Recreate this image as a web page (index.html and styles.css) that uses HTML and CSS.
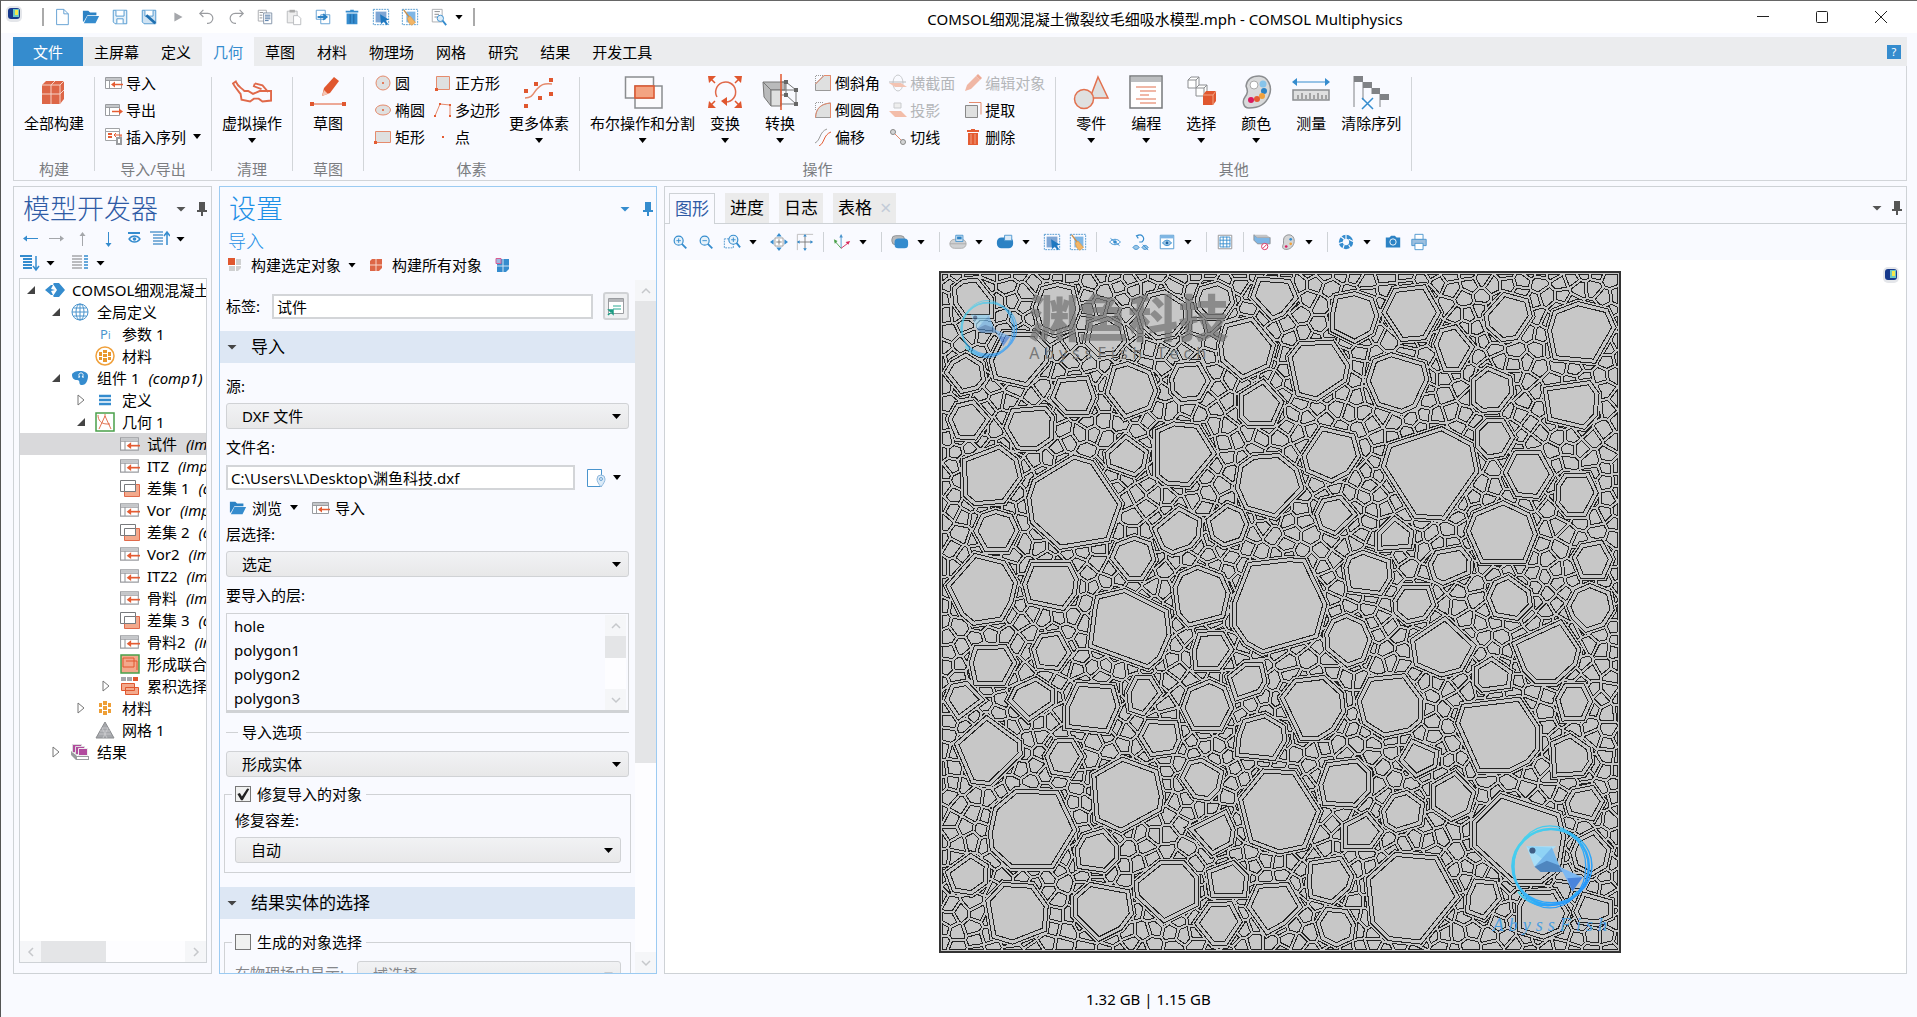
FILE: index.html
```html
<!DOCTYPE html>
<html lang="zh-CN">
<head>
  <meta charset="utf-8">
  <meta name="viewport" content="width=device-width, initial-scale=1.0">
  <title>COMSOL Multiphysics</title>
  <link rel="stylesheet" href="styles.css">
</head>
<body>
  <svg class="sprite" aria-hidden="true">
    <defs>
      <linearGradient id="ring" x1="0" y1="0" x2="1" y2="1"><stop offset="0" stop-color="#4fdcea"/><stop offset="1" stop-color="#1f8cff"/></linearGradient>
    </defs>
    <!-- quick access -->
    <symbol id="i-app" viewBox="0 0 20 20"><rect x="2" y="2" width="16" height="16" rx="5" fill="#e4e6ea"/><rect x="4" y="4" width="12" height="11" rx="3" fill="#173a8c"/><path d="M9 5h6v8H9z" fill="#6cc7c5"/><path d="M11 6h3v5h-3z" fill="#f6e84b"/></symbol>
    <symbol id="i-new" viewBox="0 0 20 20"><path d="M4 1.500h8l5 5v12H4zM12 1.500v5h5" fill="#fff" stroke="#5a9bd0"/></symbol>
    <symbol id="i-open" viewBox="0 0 20 20"><path d="M1 3h6l2 2h7v3H6l-4 7H1z" fill="#2c82c4"/><path d="M6 9h13l-4 8H2z" fill="#358cce"/></symbol>
    <symbol id="i-save" viewBox="0 0 20 20"><path d="M2.500 2.500h15v15h-13l-2-2z" fill="#e8f2fa" stroke="#4a94cd"/><path d="M5.500 3v6h9V3M6.500 17v-5h7v5" fill="#fff" stroke="#4a94cd"/></symbol>
    <symbol id="i-saveas" viewBox="0 0 20 20"><path d="M2.500 2.500h15v15h-13l-2-2z" fill="#cfe3f3" stroke="#4a94cd"/><path d="M5.500 3v6h9V3" fill="#fff" stroke="#4a94cd"/><path d="M7 8l10 9" stroke="#1e6fb0" stroke-width="3"/></symbol>
    <symbol id="i-play" viewBox="0 0 20 20"><path d="M6 5l9 5-9 5z" fill="#a5a7ab"/></symbol>
    <symbol id="i-undo" viewBox="0 0 20 20"><path d="M6 2L2 6l4 4M2 6h9a5 5 0 0 1 0 11h-1" fill="none" stroke="#9a9ca0" stroke-width="1.300"/></symbol>
    <symbol id="i-redo" viewBox="0 0 20 20"><path d="M14 2l4 4-4 4M18 6H9a5 5 0 0 0 0 11h1" fill="none" stroke="#9a9ca0" stroke-width="1.300"/></symbol>
    <symbol id="i-copy" viewBox="0 0 20 20"><path d="M2.500 2.500h9v12h-9z" fill="#fff" stroke="#a5a7ab"/><path d="M4 5h4M4 8h3M4 11h3" stroke="#8a8c90"/><path d="M8.500 5.500h9v12h-9z" fill="#fff" stroke="#7d8ea6"/><path d="M10 8h6M10 10h6M10 12h6M10 14h4" stroke="#416c9e"/></symbol>
    <symbol id="i-paste" viewBox="0 0 20 20"><path d="M2.500 3.500h11v13h-11z" fill="#eee" stroke="#b7b9bc"/><path d="M5 2h6v3H5z" fill="#aaa"/><path d="M9.500 8.500h5l3 3v7h-8z" fill="#fff" stroke="#b7b9bc"/></symbol>
    <symbol id="i-dup" viewBox="0 0 20 20"><path d="M2.500 2.500h10v10h-10zM7.500 7.500h10v10h-10z" fill="#fff" stroke="#5a9bd0"/><path d="M4 10h9M10 7l4 3-4 3" fill="none" stroke="#2c82c4" stroke-width="2"/></symbol>
    <symbol id="i-del" viewBox="0 0 20 20"><path d="M8 2h4v1h5v2H3V3h5zM4 6h12v12H4z" fill="#358cce"/><path d="M8 7v10M12 7v10" stroke="#1d639f"/></symbol>
    <symbol id="i-sel" viewBox="0 0 20 20"><path d="M1.500 1.500h17v17h-17z" fill="none" stroke="#4a94cd" stroke-dasharray="2 1"/><path d="M4 4h12v12H4z" fill="#7ea6d5"/><path d="M9 7l10 6-4 1 3 4-2 1-3-4-3 3z" fill="#1e78c0"/></symbol>
    <symbol id="i-brush" viewBox="0 0 20 20"><path d="M1.500 1.500h17v17h-17z" fill="none" stroke="#4a94cd" stroke-dasharray="2 1"/><path d="M6 4h10v12H6z" fill="#7eb6e5"/><path d="M3 2l6 8" stroke="#c98e4a" stroke-width="1.500"/><path d="M7 11l3-2 6 7-4 3c-4-2-4-5-5-8z" fill="#f3b565" stroke="#dba055"/></symbol>
    <symbol id="i-find" viewBox="0 0 20 20"><path d="M2.500 1.500h11v14h-11z" fill="#fff" stroke="#a5a7ab"/><path d="M5 4h6M5 7h5M5 10h3" stroke="#808286"/><circle cx="11.500" cy="11.500" r="3.500" fill="#dcecf8" stroke="#358cce"/><path d="M14 14l4 5" stroke="#358cce" stroke-width="2"/></symbol>
    <!-- ribbon, small -->
    <symbol id="i-import" viewBox="0 0 18 18"><path d="M.500 3.500h16v11h-16z" fill="#fff" stroke="#9a9ca0"/><path d="M1 4h15v2H1z" fill="#c4c6c9"/><path d="M.500 6.500h16M4.500 6.500v8" stroke="#9a9ca0"/><path d="M8 10.500h10" stroke="#e45c33" stroke-width="1.500"/><path d="M6 10.500l4-3v6z" fill="#e45c33"/></symbol>
    <symbol id="i-export" viewBox="0 0 18 18"><path d="M.500 3.500h14v11H.500z" fill="#fff" stroke="#9a9ca0"/><path d="M1 4h13v2H1z" fill="#c4c6c9"/><path d="M.500 6.500h14M4.500 6.500v8" stroke="#9a9ca0"/><path d="M7 10.500h8" stroke="#e45c33" stroke-width="1.500"/><path d="M18 10.500l-4-3v6z" fill="#e45c33"/></symbol>
    <symbol id="i-insert" viewBox="0 0 18 18"><path d="M.500.500h14v12h-14zM.500 3.500h14" fill="#fff" stroke="#a1a3a6"/><path d="M3 6h4M3 9h4" stroke="#e45c33" stroke-width="2"/><path d="M9 7h8M11 5L9 7l2 2M16 7v3" fill="none" stroke="#e45c33"/><path d="M11 9h6v8h-6z" fill="#9a9ca0"/><path d="M13 11h2v4h-2z" fill="#fff"/></symbol>
    <symbol id="i-circle" viewBox="0 0 18 18"><circle cx="9" cy="9" r="7" fill="#dfe0e0" stroke="#e58b6d"/><circle cx="9" cy="9" r="1" fill="#e45c33"/></symbol>
    <symbol id="i-ellipse" viewBox="0 0 18 18"><ellipse cx="9" cy="9" rx="7.500" ry="5" fill="#dfe0e0" stroke="#e58b6d"/><circle cx="9" cy="9" r="1" fill="#e45c33"/></symbol>
    <symbol id="i-rect" viewBox="0 0 18 18"><path d="M1.500 3.500h15v11h-15z" fill="#dfe0e0" stroke="#e58b6d"/><path d="M0 13h3v3H0z" fill="#e45c33"/></symbol>
    <symbol id="i-square" viewBox="0 0 18 18"><path d="M2.500 2.500h13v13h-13z" fill="#dfe0e0" stroke="#e58b6d"/><path d="M1 14h3v3H1z" fill="#e45c33"/></symbol>
    <symbol id="i-poly" viewBox="0 0 18 18"><path d="M1 15L6 3l10 1v11" fill="none" stroke="#e58b6d"/><path d="M0 14h2v2H0zM5 2h2v2H5zM15 3h2v2h-2zM15 14h2v2h-2z" fill="#e45c33"/></symbol>
    <symbol id="i-point" viewBox="0 0 18 18"><path d="M8 8h2v2H8z" fill="#e45c33"/></symbol>
    <symbol id="i-chamfer" viewBox="0 0 18 18"><path d="M1.500 9V1.500H9" fill="none" stroke="#999" stroke-dasharray="1 1"/><path d="M1.500 16.500V10L10 1.500h6.500v15z" fill="#dfe0e0" stroke="#999"/><path d="M1.500 10L10 1.500h6.500v15" fill="none" stroke="#e58b6d"/></symbol>
    <symbol id="i-fillet" viewBox="0 0 18 18"><path d="M1.500 9V1.500H9" fill="none" stroke="#999" stroke-dasharray="1 1"/><path d="M1.500 16.500C2 8 6 3 16.500 2v14.500z" fill="#dfe0e0" stroke="#999"/><path d="M1.500 16.500C2 8 6 3 16.500 2v15" fill="none" stroke="#e58b6d"/></symbol>
    <symbol id="i-offset" viewBox="0 0 18 18"><path d="M1 15C7 12 5 4 13 1" fill="none" stroke="#999"/><path d="M5 18c6-3 4-11 12-14" fill="none" stroke="#e45c33"/></symbol>
    <symbol id="i-section" viewBox="0 0 18 18"><ellipse cx="9" cy="9" rx="5" ry="8" fill="none" stroke="#c9cbce"/><path d="M0 9h12l6 4H6z" fill="#f3c3b2"/><path d="M0 8h17" stroke="#b8babd"/></symbol>
    <symbol id="i-proj" viewBox="0 0 18 18"><path d="M5 2h7v5H5z" fill="#eee" stroke="#c9cbce"/><path d="M0 10h12l6 6H6z" fill="#f3bda9"/></symbol>
    <symbol id="i-tangent" viewBox="0 0 18 18"><path d="M4 4l10 10" stroke="#e58b6d"/><circle cx="4" cy="4" r="2.500" fill="#d4d5d6" stroke="#888"/><circle cx="14" cy="14" r="2.500" fill="#d4d5d6" stroke="#888"/></symbol>
    <symbol id="i-edit" viewBox="0 0 18 18"><path d="M1 17l2-6L12 2l4 4-9 9z" fill="#f0b7a5"/><path d="M12 2l2-2 4 4-2 2z" fill="#edaa95"/></symbol>
    <symbol id="i-extract" viewBox="0 0 18 18"><path d="M5 1.500h12v12" fill="none" stroke="#e58b6d"/><path d="M1.500 4.500h12v12h-12z" fill="#dfe0e0" stroke="#888"/></symbol>
    <symbol id="i-trash" viewBox="0 0 18 18"><path d="M7 1h4v1h4v2H3V2h4zM4 5h10v12H4z" fill="#e45c33"/><path d="M7 6v10M11 6v10" stroke="#f0a084"/></symbol>
    <!-- ribbon, large -->
    <symbol id="b-build" viewBox="0 0 36 36"><path d="M6 11l4-4h18v18l-4 5H6z" fill="#dd6647"/><path d="M6 11h18v19M24 11l4-4M15 11v19M6 20h18l4-4M15 11l4-4" fill="none" stroke="#f6d3c8"/></symbol>
    <symbol id="b-glasses" viewBox="0 0 42 36"><path d="M9 20C6 16 3 13 1 9l3-2c2 5 5 6 9 10h4l5 3 7-3h12v10l-9 1-4-3h-5l-4 3-9-2zM24 9l8 2 6 7M24 9l-1 3 8 3" fill="none" stroke="#e0694a" stroke-width="2"/></symbol>
    <symbol id="b-sketch" viewBox="0 0 36 36"><path d="M12 22l2-8L24 3l5 4-9 12z" fill="#e0572f"/><path d="M12 22l2-6 4 4z" fill="#f5c5b3"/><path d="M1 30h34" stroke="#e0572f"/><path d="M0 28h4v4H0zM32 28h4v4h-4z" fill="#e0572f"/></symbol>
    <symbol id="b-more" viewBox="0 0 36 36"><path d="M4 24c8 0 8-5 12-9s6-6 15-5" fill="none" stroke="#e58b6d" stroke-width="1.500"/><path d="M28 4h4v4h-4zM13 8h4v4h-4zM3 15h4v4H3zM28 18h4v4h-4zM17 22h4v4h-4zM3 30h4v4H3z" fill="#e0572f"/></symbol>
    <symbol id="b-bool" viewBox="0 0 40 36"><path d="M2.500 3h28v21h-28zM12 12h27v22H12z" fill="#fbfbfd" stroke="#8b8d90" stroke-width="1.500"/><path d="M12 12h19v12H12z" fill="#f3a482" stroke="#e0572f" stroke-width="1.500"/></symbol>
    <symbol id="b-trans" viewBox="0 0 36 36"><path d="M10 23a10 10 0 1 1 9 5" fill="none" stroke="#e0694a" stroke-width="1.500"/><path d="M20 23v9l-6-5zM1 2h8L2 9zM35 2h-8l7 7zM1 34h8l-7-7zM35 34h-8l7-7z" fill="#e0572f"/><path d="M3 4l5 5M33 4l-5 5M3 32l5-5M33 32l-5-5" stroke="#e0572f" stroke-width="1.500"/></symbol>
    <symbol id="b-conv" viewBox="0 0 36 36"><path d="M1 8l8 8v16l-7-9zM1 8h22v8H9z" fill="#b9babb" stroke="#777"/><path d="M9 16h10v16H9z" fill="#dfe0e0" stroke="#777"/><path d="M18 8h6l10 8v14H18M24 8v13l10 9M18 21h6M18 16h16" fill="none" stroke="#777"/><path d="M22 6h4v4h-4zM32 14h4v4h-4zM22 19h4v4h-4zM32 28h4v4h-4z" fill="#666"/><path d="M19 0v36" stroke="#e0572f" stroke-width="1.500"/></symbol>
    <symbol id="b-parts" viewBox="0 0 36 36"><path d="M25 3l10 21H17z" fill="#dfe0e0" stroke="#e2714f" stroke-width="1.500"/><circle cx="11" cy="25" r="9.500" fill="#dfe0e0" stroke="#e2714f" stroke-width="1.500"/></symbol>
    <symbol id="b-prog" viewBox="0 0 36 36"><path d="M2 2h32v32H2z" fill="#fff" stroke="#77797c" stroke-width="1.500"/><path d="M3 3h30v5H3z" fill="#bcbec0"/><path d="M8 13h20M12 17h16M12 21h9M8 25h20M12 29h16" stroke="#e2714f" stroke-width="1.200"/></symbol>
    <symbol id="b-select" viewBox="0 0 36 36"><path d="M5 6l3-3h8v8l-3 3H5zM5 6h8v8M13 6l3-3M13 14l3-3h8v8l-3 3h-8zM13 14h8v8M21 14l3-3" fill="#fff" stroke="#8b8d90"/><path d="M20 21l3-4h10v10l-3 4H20z" fill="#e0572f"/><path d="M20 21h10v10M30 21l3-4" fill="none" stroke="#f3a482"/></symbol>
    <symbol id="b-color" viewBox="0 0 36 36"><path d="M8 12C9 5 14 2 21 2c9 0 14 11 10 20-4 10-13 12-20 12-6 0-7-7-4-11s3-6 1-11z" fill="#d9dadb" stroke="#8b8d90" stroke-width="1.500"/><circle cx="16" cy="11" r="4" fill="#fff" stroke="#aaa"/><circle cx="25" cy="10" r="3.500" fill="#88c4ea"/><circle cx="26" cy="17" r="3" fill="#2c82c4"/><circle cx="24" cy="22" r="3" fill="#f0a13c"/><circle cx="19" cy="25" r="3" fill="#e45c33"/><circle cx="13" cy="26" r="3" fill="#d81b60"/></symbol>
    <symbol id="b-measure" viewBox="0 0 38 36"><path d="M3 8h32" stroke="#358cce"/><path d="M0 8l5-4v8zM38 8l-5-4v8z" fill="#358cce"/><path d="M1 16h36v10H1z" fill="#dfe0e0" stroke="#8b8d90" stroke-width="1.500"/><path d="M6 25v-4M10 25v-6M14 25v-4M18 25v-6M22 25v-4M26 25v-6M30 25v-4M34 25v-4" stroke="#666"/></symbol>
    <symbol id="b-clear" viewBox="0 0 36 36"><path d="M1 2h9v6H1zM10 8h9v6h-9zM19 14h8v6h-8zM27 20h9v6h-9z" fill="#808286"/><path d="M1 2v31M10 8v18M19 14v6M27 20v13" stroke="#808286"/><path d="M9 24l11 11M20 24L9 35" stroke="#358cce" stroke-width="1.500"/></symbol>
    <!-- panels -->
    <symbol id="i-pin" viewBox="0 0 12 16"><path d="M3 1h6v8h2v2H7v4H5v-4H1V9h2z" fill="currentColor"/></symbol>
    <symbol id="i-left" viewBox="0 0 20 20"><path d="M18 9.500H4" stroke="currentColor"/><path d="M3 9.500l4-3v6z" fill="currentColor"/></symbol>
    <symbol id="i-right" viewBox="0 0 20 20"><path d="M3 9.500h13" stroke="currentColor"/><path d="M18 9.500l-4-3v6z" fill="currentColor"/></symbol>
    <symbol id="i-up" viewBox="0 0 20 20"><path d="M10.500 17V4" stroke="currentColor"/><path d="M10.500 3l-3 4h6z" fill="currentColor"/></symbol>
    <symbol id="i-down" viewBox="0 0 20 20"><path d="M10.500 3v13" stroke="currentColor"/><path d="M10.500 18l-3-4h6z" fill="currentColor"/></symbol>
    <symbol id="i-eye" viewBox="0 0 20 20"><path d="M4 4h12" stroke="#358cce" stroke-width="2"/><path d="M5 10c3-4 8-4 11 0-3 4-8 4-11 0z" fill="none" stroke="#358cce" stroke-width="1.300"/><circle cx="10.500" cy="10" r="1.800" fill="#358cce"/></symbol>
    <symbol id="i-listup" viewBox="0 0 20 20"><path d="M0 3h13M3 6h10M3 9h10M3 12h10M3 15h10" stroke="#5a9bd0" stroke-width="1.500"/><path d="M17 16V4M14 7l3-4 3 4" fill="none" stroke="#358cce" stroke-width="1.500"/></symbol>
    <symbol id="i-listdown" viewBox="0 0 20 20"><path d="M0 3h12M3 6h9M3 9h9M3 12h9M3 15h9" stroke="#358cce" stroke-width="2"/><path d="M16 3v13M13 13l3 4 3-4" fill="none" stroke="#358cce" stroke-width="1.500"/></symbol>
    <symbol id="i-cols" viewBox="0 0 20 20"><path d="M2 3h10M2 6h10M2 9h10M2 12h10M2 15h10" stroke="#a5a7ab" stroke-width="1.500"/><path d="M14 3h4M14 6h4M14 9h4M14 12h4M14 15h4" stroke="#358cce" stroke-width="1.500"/></symbol>
    <symbol id="t-open" viewBox="0 0 12 12"><path d="M10 2v8H2z" fill="#444"/></symbol>
    <symbol id="t-shut" viewBox="0 0 12 12"><path d="M3 1l6 5-6 5z" fill="#fff" stroke="#777"/></symbol>
    <symbol id="t-root" viewBox="0 0 20 20"><path d="M0 10l6-5h2L6 9l4 1-4 1 2 4H6zM9 3h5l6 7-6 7H9l-1-1 4-6-4-6z" fill="#358cce"/></symbol>
    <symbol id="t-globe" viewBox="0 0 20 20"><g fill="none" stroke="#4a94cd"><circle cx="10" cy="10" r="8"/><ellipse cx="10" cy="10" rx="4" ry="8"/><path d="M2 10h16M10 2v16M3.500 6h13M3.500 14h13"/></g></symbol>
    <symbol id="t-mat" viewBox="0 0 20 20"><circle cx="10" cy="10" r="9" fill="#fff" stroke="#f0a13c" stroke-width="1.500"/><path d="M8 4h4v3H8zM4 6h3v4H4zM13 6h3v4h-3zM8 8h4v3H8zM4 11h3v3H4zM13 11h3v3h-3zM8 12h4v4H8z" fill="#e8972e"/></symbol>
    <symbol id="t-mat2" viewBox="0 0 20 20"><path d="M8 3h4v4H8zM4 5h3v4H4zM13 5h3v4h-3zM8 8h4v4H8zM4 11h3v4H4zM13 11h3v4h-3zM8 13h4v4H8z" fill="#ee9f36"/></symbol>
    <symbol id="t-comp" viewBox="0 0 20 20"><path d="M2 7c0-5 16-6 16 1 0 4-2 10-7 9-3-1 0-5-4-5-3 0-5-2-5-5z" fill="#358cce"/><path d="M8 9h2c-2-2-1-4 1-4s3 2 1 4h2" fill="none" stroke="#fff"/></symbol>
    <symbol id="t-def" viewBox="0 0 20 20"><path d="M4 6h12M4 10h12M4 14h12" stroke="#358cce" stroke-width="2.500"/></symbol>
    <symbol id="t-geom" viewBox="0 0 20 20"><path d="M1 1h18v18H1z" fill="#fff" stroke="#4aa04a" stroke-width="1.500"/><path d="M3 3c0 5 3 9 9 9h3M10 4L4 17M10 4l6 13M10 2v3" fill="none" stroke="#e2714f"/></symbol>
    <symbol id="t-diff" viewBox="0 0 20 20"><path d="M4.500 6.500h15v12h-15z" fill="#f3a98c" stroke="#e0694a"/><path d="M.500 2.500h15v11H.500z" fill="#fff" stroke="#77797c"/><path d="M4.500 6.500h11v7h-11z" fill="#fff" stroke="#77797c"/></symbol>
    <symbol id="t-union" viewBox="0 0 20 20"><path d="M1 1h18v18H1z" fill="#f3a98c" stroke="#4aa04a" stroke-width="1.500"/><path d="M3 4h11v9H3zM6 7h11v9" fill="none" stroke="#e0572f"/></symbol>
    <symbol id="t-cum" viewBox="0 0 20 20"><path d="M1 1h5v4H1zM7 1h5v4H7z" fill="#a5a7ab"/><path d="M13 1h5v4h-5z" fill="#e0572f"/><path d="M1.500 7.500h13v7h-13zM5.500 11.500h13v7h-13z" fill="#f3a98c" stroke="#e0572f"/></symbol>
    <symbol id="t-mesh" viewBox="0 0 20 20"><path d="M10 2l9 16H1z" fill="#a5a7ab" stroke="#8b8d90"/><path d="M7 8h6M5 11h10M4 14h12M7 8l5 10M13 8L8 18" stroke="#d2d3d5" stroke-width=".700"/></symbol>
    <symbol id="t-res" viewBox="0 0 20 20"><path d="M1 9l6 5h12v4H6l-5-5z" fill="#999b9e"/><path d="M7 15h11v2H7z" fill="#fff"/><path d="M2.500 2.500h9v8h-9z" fill="#b14b9e" stroke="#ddd"/><path d="M5.500 4.500h9v8h-9z" fill="#b14b9e" stroke="#ddd"/><path d="M8.500 6.500h9v7h-9z" fill="#b14b9e" stroke="#eee"/></symbol>
    <symbol id="i-bsel" viewBox="0 0 18 18"><path d="M5 5l2-2h8v9l-3 3H3V7z" fill="#cfd0d1"/><path d="M2 2h7v7H2z" fill="#e0572f"/><path d="M9.500 3v12M3 9.500h12" stroke="#fff"/></symbol>
    <symbol id="i-ball" viewBox="0 0 18 18"><path d="M3 5l2-2h10v9l-3 3H3z" fill="#dd6647"/><path d="M9 3v12M3 9h12" stroke="#f8d5ca"/></symbol>
    <symbol id="i-bblue" viewBox="0 0 18 18"><path d="M4 5l2-2h10v10l-3 3H4z" fill="#358cce"/><path d="M10 3v13M4 10h12" stroke="#cfe3f3"/><path d="M3 2.500h5v5H3z" fill="#9db8e0" stroke="#d85c92"/></symbol>
    <symbol id="i-goto" viewBox="0 0 20 20"><path d="M2.500 2.500h15v15h-15z" fill="#fff" stroke="#9a9ca0"/><path d="M3 3h14v3H3z" fill="#b4b6b9"/><path d="M7 10h8M7 13h8" stroke="#2bab93"/><path d="M2 19l4-4M3 14h4v4z" stroke="#1c9c83" stroke-width="1.500" fill="#1c9c83"/></symbol>
    <symbol id="i-loc" viewBox="0 0 20 20"><path d="M1.500 1.500h14v17h-14z" fill="#fff" stroke="#4a94cd"/><path d="M15 19c-3-4-4-6-4-8a4 4 0 0 1 8 0c0 2-1 4-4 8z" fill="#dcebf8" stroke="#8fb8dd"/><circle cx="15" cy="11" r="1.500" fill="none" stroke="#6ea5d5"/></symbol>
    <symbol id="i-chev" viewBox="0 0 12 12"><path d="M2 8l4-4 4 4" fill="none" stroke="#c6c8cb" stroke-width="1.500"/></symbol>
    <!-- graphics toolbar -->
    <symbol id="g-zin" viewBox="0 0 20 20"><circle cx="8.500" cy="8.500" r="5" fill="#e7f2fa" stroke="#358cce" stroke-width="1.300"/><path d="M6 8.500h5M8.500 6v5" stroke="#358cce"/><path d="M12 12l5 5" stroke="#358cce" stroke-width="2"/></symbol>
    <symbol id="g-zout" viewBox="0 0 20 20"><circle cx="8.500" cy="8.500" r="5" fill="#e7f2fa" stroke="#358cce" stroke-width="1.300"/><path d="M6 8.500h5" stroke="#358cce"/><path d="M12 12l5 5" stroke="#358cce" stroke-width="2"/></symbol>
    <symbol id="g-zbox" viewBox="0 0 20 20"><path d="M1.500 6.500h10v10h-10z" fill="none" stroke="#4a94cd" stroke-dasharray="2 1"/><circle cx="11.500" cy="7.500" r="5" fill="#e7f2fa" stroke="#358cce" stroke-width="1.300"/><path d="M9 7.500h5M11.500 5v5" stroke="#358cce"/><path d="M15 11l4 5" stroke="#358cce" stroke-width="2"/></symbol>
    <symbol id="g-ext" viewBox="0 0 20 20"><path d="M5.500 5.500h9v9h-9z" fill="#fff" stroke="#999"/><path d="M7 10h6M10 7v6" stroke="#777"/><path d="M10 0l3 4H7zM10 20l3-4H7zM0 10l4-3v6zM20 10l-4-3v6z" fill="#358cce"/></symbol>
    <symbol id="g-ext2" viewBox="0 0 20 20"><path d="M1.500 19V1.500H19" fill="none" stroke="#bbb"/><path d="M10 3v15M2 10h16" stroke="#777"/><path d="M10 1l2 3H8zM10 20l2-3H8zM1 10l3-2v4zM19 10l-3-2v4z" fill="#358cce"/></symbol>
    <symbol id="g-axes" viewBox="0 0 20 20"><path d="M9 17V3" stroke="#4a94cd"/><path d="M9 1l2 4H7z" fill="#4a94cd"/><path d="M9 17L2 9" stroke="#4aa04a"/><path d="M1 7l4 2-3 3z" fill="#4aa04a"/><path d="M9 17l8-6" stroke="#d8285a"/><path d="M19 9l-2 4-3-3z" fill="#d8285a"/></symbol>
    <symbol id="g-scene" viewBox="0 0 20 20"><rect x="1" y="3" width="14" height="10" rx="4" fill="#b9bbbd" stroke="#8b8d90"/><rect x="4" y="6" width="15" height="11" rx="4" fill="#358cce"/></symbol>
    <symbol id="g-view1" viewBox="0 0 20 20"><rect x="1" y="7" width="18" height="10" rx="5" fill="#d0d1d3" stroke="#aaa"/><path d="M7.500 2.500h8v7h-8z" fill="#cfe3f3" stroke="#4a94cd"/><path d="M9 4h5v3H9z" fill="#2c82c4"/><path d="M1 12h18" stroke="#aaa"/></symbol>
    <symbol id="g-view2" viewBox="0 0 20 20"><rect x="1" y="5" width="18" height="12" rx="5" fill="#2c82c4"/><path d="M9.500 2.500h8v6h-8z" fill="#dcebf8" stroke="#4a94cd"/></symbol>
    <symbol id="g-hide" viewBox="0 0 20 20"><path d="M4 10c3-4 9-4 12 0-3 4-9 4-12 0zM5 6l10 8" fill="none" stroke="#358cce"/><circle cx="10" cy="10" r="2" fill="#358cce"/></symbol>
    <symbol id="g-reset" viewBox="0 0 20 20"><path d="M8 2l-3 1 2 3M6 3c6-3 9 4 5 7H8" fill="none" stroke="#358cce" stroke-width="1.300"/><path d="M1 16c2-3 5-3 7 0-2 3-5 3-7 0zM11 16c2-3 5-3 7 0-2 3-5 3-7 0zM12 13l6 6" fill="#9cc6e6" stroke="#358cce"/></symbol>
    <symbol id="g-eyebox" viewBox="0 0 20 20"><path d="M2.500 2.500h15v15h-15z" fill="#fff" stroke="#4a94cd"/><path d="M3 3h14v3H3z" fill="#7eb6e5"/><path d="M5 11c3-4 7-4 10 0-3 4-7 4-10 0z" fill="#9cc6e6" stroke="#358cce"/><circle cx="10" cy="11" r="1.500" fill="#1d639f"/></symbol>
    <symbol id="g-grid" viewBox="0 0 20 20"><path d="M2.500 2.500h15v15h-15z" fill="#fff" stroke="#8e9094"/><path d="M4.500 4.500h11v11h-11zM8 4v12M12 4v12M4 8h12M4 12h12" fill="none" stroke="#358cce"/></symbol>
    <symbol id="g-clip" viewBox="0 0 20 20"><path d="M1 2l4 3h14v7H5L1 8z" fill="#7eb6e5" stroke="#8b8d90"/><path d="M1 2h14l4 3H5z" fill="#c4c5c7"/><circle cx="13" cy="15" r="3.500" fill="#fff" stroke="#d8285a"/><path d="M11 17l4-4" stroke="#d8285a"/></symbol>
    <symbol id="g-pal" viewBox="0 0 20 20"><path d="M5 8c0-4 3-6 6-6 6 0 7 7 5 11s-6 6-10 5c-3-1-2-4-1-6z" fill="#d4d5d6" stroke="#8b8d90"/><circle cx="13" cy="7" r="1.500" fill="#358cce"/><circle cx="13" cy="12" r="1.500" fill="#f0a13c"/><circle cx="8" cy="15" r="1.500" fill="#d81b60"/></symbol>
    <symbol id="g-shut" viewBox="0 0 20 20"><circle cx="10" cy="10" r="8" fill="#358cce"/><circle cx="10" cy="10" r="3.500" fill="#f9faff"/><path d="M10 1v6M19 10l-6-3M16 18l-3-5M6 19l2-6M1 12l6-2M3 3l5 4" stroke="#f9faff" stroke-width="1.300"/></symbol>
    <symbol id="g-cam" viewBox="0 0 20 20"><path d="M2 5h4l2-2h4l2 2h4v11H2z" fill="#2c82c4"/><circle cx="10" cy="10" r="3.500" fill="#2c82c4" stroke="#fff"/></symbol>
    <symbol id="g-print" viewBox="0 0 20 20"><path d="M5.500 1.500h9v6h-9z" fill="#fff" stroke="#4a94cd"/><path d="M2 7h16v7H2z" fill="#9cbfdf" stroke="#4a94cd"/><path d="M5.500 11.500h9v7h-9z" fill="#fff" stroke="#4a94cd"/></symbol>
    <!-- AbyssFish emblem -->
    <symbol id="fish" viewBox="0 0 84 84">
      <g fill="none" stroke="url(#ring)"><circle cx="42" cy="42" r="37" stroke-width="2.500"/><ellipse cx="43" cy="41" rx="39" ry="36" stroke-width="1.500"/><ellipse cx="41" cy="42" rx="35" ry="40" stroke-width="1.200"/><path d="M10 66C20 82 52 86 68 66" stroke-width="2"/></g>
      <path d="M18 22l8 20 21-20z" fill="#a9dff8"/><path d="M18 22l25 1 8 20-14-6z" fill="#8fd3f5"/><path d="M26 42l17-19 8 20z" fill="#74b6ea"/><path d="M26 42l6 5 22 0-3-6-13-5z" fill="#4f86bf"/><path d="M50 42l23 10-10 14-9-18z" fill="#7db8f2"/><path d="M73 52l-10 14-5-13z" fill="#4a84dc"/>
      <circle cx="24" cy="26" r="3" fill="#3f5f86"/>
    </symbol>
  </svg>

  <header class="titlebar">
    <svg class="app-icon"><use href="#i-app"/></svg>
    <nav class="quick" aria-label="快速访问">
      <button aria-label="新建"><svg><use href="#i-new"/></svg></button>
      <button aria-label="打开"><svg><use href="#i-open"/></svg></button>
      <button aria-label="保存"><svg><use href="#i-save"/></svg></button>
      <button aria-label="另存为"><svg><use href="#i-saveas"/></svg></button>
      <button aria-label="运行"><svg><use href="#i-play"/></svg></button>
      <button aria-label="撤消"><svg><use href="#i-undo"/></svg></button>
      <button aria-label="重做"><svg><use href="#i-redo"/></svg></button>
      <button aria-label="复制"><svg><use href="#i-copy"/></svg></button>
      <button aria-label="粘贴"><svg><use href="#i-paste"/></svg></button>
      <button aria-label="生成副本"><svg><use href="#i-dup"/></svg></button>
      <button aria-label="删除"><svg><use href="#i-del"/></svg></button>
      <button aria-label="全选"><svg><use href="#i-sel"/></svg></button>
      <button aria-label="清除选择"><svg><use href="#i-brush"/></svg></button>
      <button aria-label="查找"><svg><use href="#i-find"/></svg></button>
      <button class="more" aria-label="更多"><i class="tri"></i></button>
    </nav>
    <div class="window-title">COMSOL细观混凝土微裂纹毛细吸水模型.mph - COMSOL Multiphysics</div>
    <div class="window-buttons">
      <button aria-label="最小化"><svg viewBox="0 0 14 14"><path d="M1 6.500h12" stroke="#222"/></svg></button>
      <button aria-label="最大化"><svg viewBox="0 0 14 14"><rect x="1.500" y="1.500" width="11" height="11" rx="1" fill="none" stroke="#222"/></svg></button>
      <button aria-label="关闭"><svg viewBox="0 0 14 14"><path d="M1 1l12 12M13 1L1 13" stroke="#222"/></svg></button>
    </div>
  </header>

  <nav class="tabs">
    <button class="tab file">文件</button>
    <button class="tab">主屏幕</button>
    <button class="tab">定义</button>
    <button class="tab active">几何</button>
    <button class="tab">草图</button>
    <button class="tab">材料</button>
    <button class="tab">物理场</button>
    <button class="tab">网格</button>
    <button class="tab">研究</button>
    <button class="tab">结果</button>
    <button class="tab">开发工具</button>
    <button class="help">?</button>
  </nav>

  <section class="ribbon">
    <div class="group">
      <div class="items">
        <button class="big"><svg><use href="#b-build"/></svg>全部构建</button>
      </div>
      <div class="group-name">构建</div>
    </div>
    <div class="group">
      <div class="items">
        <div class="stack">
          <button><svg><use href="#i-import"/></svg>导入</button>
          <button><svg><use href="#i-export"/></svg>导出</button>
          <button><svg><use href="#i-insert"/></svg>插入序列<i class="tri"></i></button>
        </div>
      </div>
      <div class="group-name">导入/导出</div>
    </div>
    <div class="group">
      <div class="items">
        <button class="big"><svg><use href="#b-glasses"/></svg>虚拟操作<i class="tri"></i></button>
      </div>
      <div class="group-name">清理</div>
    </div>
    <div class="group">
      <div class="items">
        <button class="big"><svg><use href="#b-sketch"/></svg>草图</button>
      </div>
      <div class="group-name">草图</div>
    </div>
    <div class="group">
      <div class="items">
        <div class="stack">
          <button><svg><use href="#i-circle"/></svg>圆</button>
          <button><svg><use href="#i-ellipse"/></svg>椭圆</button>
          <button><svg><use href="#i-rect"/></svg>矩形</button>
        </div>
        <div class="stack">
          <button><svg><use href="#i-square"/></svg>正方形</button>
          <button><svg><use href="#i-poly"/></svg>多边形</button>
          <button><svg><use href="#i-point"/></svg>点</button>
        </div>
        <button class="big"><svg><use href="#b-more"/></svg>更多体素<i class="tri"></i></button>
      </div>
      <div class="group-name">体素</div>
    </div>
    <div class="group">
      <div class="items">
        <button class="big"><svg><use href="#b-bool"/></svg>布尔操作和分割<i class="tri"></i></button>
        <button class="big"><svg><use href="#b-trans"/></svg>变换<i class="tri"></i></button>
        <button class="big"><svg><use href="#b-conv"/></svg>转换<i class="tri"></i></button>
        <div class="stack">
          <button><svg><use href="#i-chamfer"/></svg>倒斜角</button>
          <button><svg><use href="#i-fillet"/></svg>倒圆角</button>
          <button><svg><use href="#i-offset"/></svg>偏移</button>
        </div>
        <div class="stack">
          <button disabled><svg><use href="#i-section"/></svg>横截面</button>
          <button disabled><svg><use href="#i-proj"/></svg>投影</button>
          <button><svg><use href="#i-tangent"/></svg>切线</button>
        </div>
        <div class="stack">
          <button disabled><svg><use href="#i-edit"/></svg>编辑对象</button>
          <button><svg><use href="#i-extract"/></svg>提取</button>
          <button><svg><use href="#i-trash"/></svg>删除</button>
        </div>
      </div>
      <div class="group-name">操作</div>
    </div>
    <div class="group">
      <div class="items">
        <button class="big"><svg><use href="#b-parts"/></svg>零件<i class="tri"></i></button>
        <button class="big"><svg><use href="#b-prog"/></svg>编程<i class="tri"></i></button>
        <button class="big"><svg><use href="#b-select"/></svg>选择<i class="tri"></i></button>
        <button class="big"><svg><use href="#b-color"/></svg>颜色<i class="tri"></i></button>
        <button class="big"><svg><use href="#b-measure"/></svg>测量</button>
        <button class="big"><svg><use href="#b-clear"/></svg>清除序列</button>
      </div>
      <div class="group-name">其他</div>
    </div>
  </section>

  <main class="workspace">
    <section class="panel model">
      <div class="panel-head"><h2>模型开发器</h2><i class="tri"></i><svg class="pin"><use href="#i-pin"/></svg></div>
      <div class="tree-tools">
        <button aria-label="上一个"><svg><use href="#i-left"/></svg></button>
        <button class="off" aria-label="下一个"><svg><use href="#i-right"/></svg></button>
        <button class="off" aria-label="上移"><svg><use href="#i-up"/></svg></button>
        <button aria-label="下移"><svg><use href="#i-down"/></svg></button>
        <button aria-label="显示"><svg><use href="#i-eye"/></svg></button>
        <button aria-label="全部折叠"><svg><use href="#i-listup"/></svg></button>
        <i class="tri"></i>
      </div>
      <div class="tree-tools">
        <button aria-label="全部展开"><svg><use href="#i-listdown"/></svg></button>
        <i class="tri"></i>
        <button aria-label="列"><svg><use href="#i-cols"/></svg></button>
        <i class="tri"></i>
      </div>
      <div class="tree-box">
        <ul class="tree">
          <li class="level1"><svg class="twist"><use href="#t-open"/></svg><svg><use href="#t-root"/></svg>COMSOL细观混凝土微裂纹毛细吸水模型.mph</li>
          <li class="level2"><svg class="twist"><use href="#t-open"/></svg><svg><use href="#t-globe"/></svg>全局定义</li>
          <li class="level3"><span class="twist"></span><span class="pi">P<small>i</small></span>参数 1</li>
          <li class="level3"><span class="twist"></span><svg><use href="#t-mat"/></svg>材料</li>
          <li class="level2"><svg class="twist"><use href="#t-open"/></svg><svg><use href="#t-comp"/></svg>组件 1<em>(comp1)</em></li>
          <li class="level3"><svg class="twist"><use href="#t-shut"/></svg><svg><use href="#t-def"/></svg>定义</li>
          <li class="level3"><svg class="twist"><use href="#t-open"/></svg><svg><use href="#t-geom"/></svg>几何 1</li>
          <li class="level4 selected"><span class="twist"></span><svg><use href="#i-import"/></svg>试件<em>(imp1)</em></li>
          <li class="level4"><span class="twist"></span><svg><use href="#i-import"/></svg>ITZ<em>(imp2)</em></li>
          <li class="level4"><span class="twist"></span><svg><use href="#t-diff"/></svg>差集 1<em>(dif1)</em></li>
          <li class="level4"><span class="twist"></span><svg><use href="#i-import"/></svg>Vor<em>(imp3)</em></li>
          <li class="level4"><span class="twist"></span><svg><use href="#t-diff"/></svg>差集 2<em>(dif2)</em></li>
          <li class="level4"><span class="twist"></span><svg><use href="#i-import"/></svg>Vor2<em>(imp4)</em></li>
          <li class="level4"><span class="twist"></span><svg><use href="#i-import"/></svg>ITZ2<em>(imp5)</em></li>
          <li class="level4"><span class="twist"></span><svg><use href="#i-import"/></svg>骨料<em>(imp6)</em></li>
          <li class="level4"><span class="twist"></span><svg><use href="#t-diff"/></svg>差集 3<em>(dif3)</em></li>
          <li class="level4"><span class="twist"></span><svg><use href="#i-import"/></svg>骨料2<em>(imp7)</em></li>
          <li class="level4"><span class="twist"></span><svg><use href="#t-union"/></svg>形成联合体<em>(fin)</em></li>
          <li class="level4"><svg class="twist"><use href="#t-shut"/></svg><svg><use href="#t-cum"/></svg>累积选择</li>
          <li class="level3"><svg class="twist"><use href="#t-shut"/></svg><svg><use href="#t-mat2"/></svg>材料</li>
          <li class="level3"><span class="twist"></span><svg><use href="#t-mesh"/></svg>网格 1</li>
          <li class="level2"><svg class="twist"><use href="#t-shut"/></svg><svg><use href="#t-res"/></svg>结果</li>
        </ul>
        <div class="hscroll">
          <button aria-label="向左"><svg class="turn-left"><use href="#i-chev"/></svg></button>
          <div class="rail"><div class="thumb"></div></div>
          <button aria-label="向右"><svg class="turn-right"><use href="#i-chev"/></svg></button>
        </div>
      </div>
    </section>

    <section class="panel settings">
      <div class="panel-head"><h2>设置</h2><i class="tri"></i><svg class="pin"><use href="#i-pin"/></svg></div>
      <h3>导入</h3>
      <div class="build-tools">
        <button><svg><use href="#i-bsel"/></svg>构建选定对象<i class="tri"></i></button>
        <button><svg><use href="#i-ball"/></svg>构建所有对象</button>
        <button aria-label="在图形中构建"><svg><use href="#i-bblue"/></svg></button>
      </div>
      <div class="scroll-area">
        <form class="form">
          <div class="label-row">
            <label for="label">标签:</label>
            <input type="text" id="label" value="试件">
            <button type="button" class="goto" aria-label="转到源"><svg><use href="#i-goto"/></svg></button>
          </div>

          <h4><i class="tri"></i>导入</h4>
          <div class="fields">
            <label for="source">源:</label>
            <span class="select"><select id="source"><option>DXF 文件</option></select></span>
            <label for="filename">文件名:</label>
            <div class="file-row">
              <input type="text" id="filename" value="C:\Users\L\Desktop\渊鱼科技.dxf">
              <button type="button" aria-label="位置"><svg><use href="#i-loc"/></svg><i class="tri"></i></button>
            </div>
            <div class="file-actions">
              <button type="button"><svg><use href="#i-open"/></svg>浏览<i class="tri"></i></button>
              <button type="button"><svg><use href="#i-import"/></svg>导入</button>
            </div>
            <label for="layersel">层选择:</label>
            <span class="select"><select id="layersel"><option>选定</option></select></span>
            <label for="layers">要导入的层:</label>
            <div class="listbox">
              <select id="layers" size="4">
                <option>hole</option>
                <option>polygon1</option>
                <option>polygon2</option>
                <option>polygon3</option>
              </select>
              <div class="vscroll">
                <button type="button" aria-label="向上"><svg><use href="#i-chev"/></svg></button>
                <div class="rail"><div class="thumb"></div></div>
                <button type="button" aria-label="向下"><svg class="turn-down"><use href="#i-chev"/></svg></button>
              </div>
            </div>
            <label class="divider" for="form-type">导入选项</label>
            <span class="select"><select id="form-type"><option>形成实体</option></select></span>
          </div>
          <fieldset>
            <legend><label><input type="checkbox" checked>修复导入的对象</label></legend>
            <label for="tol">修复容差:</label>
            <span class="select"><select id="tol"><option>自动</option></select></span>
          </fieldset>

          <h4><i class="tri"></i>结果实体的选择</h4>
          <fieldset class="entities">
            <legend><label><input type="checkbox">生成的对象选择</label></legend>
            <div class="inline">
              <label for="showin">在物理场中显示:</label>
              <span class="select"><select id="showin" disabled><option>域选择</option></select></span>
            </div>
          </fieldset>
        </form>
        <div class="vscroll">
          <button aria-label="向上"><svg><use href="#i-chev"/></svg></button>
          <div class="rail"><div class="thumb"></div></div>
          <button aria-label="向下"><svg class="turn-down"><use href="#i-chev"/></svg></button>
        </div>
      </div>
    </section>

    <section class="panel graphics">
      <div class="view-tabs">
        <button class="active">图形</button>
        <button>进度</button>
        <button>日志</button>
        <button>表格<span class="close">×</span></button>
        <span class="view-end"><i class="tri"></i><svg class="pin"><use href="#i-pin"/></svg></span>
      </div>
      <div class="view-tools">
        <button aria-label="放大"><svg><use href="#g-zin"/></svg></button>
        <button aria-label="缩小"><svg><use href="#g-zout"/></svg></button>
        <button aria-label="缩放框"><svg><use href="#g-zbox"/></svg></button><i class="tri"></i>
        <button aria-label="缩放到窗口大小"><svg><use href="#g-ext"/></svg></button>
        <button aria-label="自动缩放"><svg><use href="#g-ext2"/></svg></button>
        <span class="bar"></span>
        <button aria-label="视图"><svg><use href="#g-axes"/></svg></button><i class="tri"></i>
        <span class="bar"></span>
        <button aria-label="场景"><svg><use href="#g-scene"/></svg></button><i class="tri"></i>
        <span class="bar"></span>
        <button aria-label="选择对象"><svg><use href="#g-view1"/></svg></button><i class="tri"></i>
        <button aria-label="选择域"><svg><use href="#g-view2"/></svg></button><i class="tri"></i>
        <button aria-label="选择框"><svg><use href="#i-sel"/></svg></button>
        <button aria-label="取消选择框"><svg><use href="#i-brush"/></svg></button>
        <span class="bar"></span>
        <button aria-label="隐藏"><svg><use href="#g-hide"/></svg></button>
        <button aria-label="重置隐藏"><svg><use href="#g-reset"/></svg></button>
        <button aria-label="显示隐藏"><svg><use href="#g-eyebox"/></svg></button><i class="tri"></i>
        <span class="bar"></span>
        <button aria-label="网格"><svg><use href="#g-grid"/></svg></button>
        <span class="bar"></span>
        <button aria-label="裁剪"><svg><use href="#g-clip"/></svg></button>
        <button aria-label="颜色"><svg><use href="#g-pal"/></svg></button><i class="tri"></i>
        <span class="bar"></span>
        <button aria-label="环境"><svg><use href="#g-shut"/></svg></button><i class="tri"></i>
        <button aria-label="快照"><svg><use href="#g-cam"/></svg></button>
        <button aria-label="打印"><svg><use href="#g-print"/></svg></button>
      </div>
      <div class="canvas">
        <svg class="plot" viewBox="0 0 681 681">
          <defs><clipPath id="cell-clip"><path id="clip-path"/></clipPath></defs>
          <rect width="681" height="681" fill="#c7c7c7"/>
          <g class="crisp">
            <path id="cells" class="line"/>
            <g clip-path="url(#cell-clip)"><path class="agg dark" stroke-width="14"/></g>
            <path class="agg gray" stroke-width="12"/>
            <path class="agg dark" stroke-width="9"/>
            <path class="agg gray" stroke-width="7"/>
            <path class="agg line"/>
            <rect x="1" y="1" width="679" height="679" fill="none" stroke="#333" stroke-width="2"/>
          </g>
          <use href="#fish" x="19" y="28" width="60" height="60" opacity=".7"/>
          <text class="mark-cn" x="89" y="66">渊鱼科技</text>
          <text class="mark-en" x="90" y="88">AbyssFish Tech</text>
          <use href="#fish" x="568" y="552" width="86" height="86"/>
          <text class="mark-fish" x="553" y="659">AbyssFish</text>
        </svg>
        <svg class="corner-icon"><use href="#i-app"/></svg>
      </div>
    </section>
  </main>

  <footer class="status">1.32 GB | 1.15 GB</footer>
  <script src="model.js"></script>
</body>
</html>
```
FILE: styles.css
```css
* {
  box-sizing: border-box;
}
body {
  margin: 0;
  height: 100vh;
  display: flex;
  flex-direction: column;
  overflow: hidden;
  background: #f9faff;
  border-left: 1px solid #555;
  border-top: 1px solid #666;
  color: #000;
  font-family: "Noto Sans", "Noto Sans CJK SC", sans-serif;
  font-size: 15px;
  line-height: 22px;
}
button, input, select {
  font: inherit;
  color: inherit;
}
button {
  display: flex;
  align-items: center;
  padding: 0;
  border: none;
  background: none;
  white-space: nowrap;
}
ul, h2, h3, h4 {
  margin: 0;
  padding: 0;
  font-weight: normal;
}
svg {
  flex: none;
  width: 20px;
  height: 20px;
}
.sprite {
  position: absolute;
  width: 0;
  height: 0;
}
.tri {
  flex: none;
  width: 8px;
  height: 5px;
  background: currentColor;
  clip-path: polygon(0 0, 100% 0, 50% 100%);
}
.pin {
  width: 12px;
  height: 16px;
}

/* title bar */
.titlebar {
  display: flex;
  align-items: center;
  height: 32px;
  background: #fff;
}
.app-icon {
  margin: 0 8px 6px 3px;
}
.quick {
  display: flex;
  align-items: center;
  margin-left: 10px;
  padding: 0 8px 0 3px;
  border-left: 2px solid #aaa;
  border-right: 2px solid #aaa;
  height: 18px;
}
.quick button {
  width: 29px;
  justify-content: center;
}
.quick svg {
  width: 18px;
  height: 18px;
}
.quick .more {
  width: 12px;
}
.window-title {
  flex: 1;
  padding: 4px 0 0 122px;
  text-align: center;
}
.window-buttons {
  display: flex;
  padding-right: 7px;
}
.window-buttons button {
  width: 59px;
  justify-content: center;
}
.window-buttons svg {
  width: 14px;
  height: 14px;
}

/* ribbon */
.tabs {
  display: flex;
  height: 29px;
  margin: 4px 10px 0 12px;
  background: #ebecee;
}
.tab {
  padding: 0 11px;
}
.tab.file {
  padding: 0 20px;
  background: #358cce;
  color: #fff;
}
.tab.active {
  background: #f9faff;
  color: #358cce;
}
.help {
  align-self: center;
  justify-content: center;
  width: 14px;
  height: 14px;
  margin: 0 6px 0 auto;
  background: #358cce;
  color: #fff;
  font-size: 11px;
}
.ribbon {
  display: flex;
  height: 115px;
  margin: 0 10px 0 12px;
  border: 1px solid #d2d5d9;
  border-top: none;
}
.group {
  display: flex;
  flex-direction: column;
  padding: 3px 11px 0 10px;
  background: linear-gradient(#d2d5d9, #d2d5d9) right 11px / 1px 94px no-repeat;
}
.items {
  display: flex;
  flex: 1;
  gap: 5px;
}
.big {
  flex-direction: column;
  min-width: 50px;
  padding-top: 5px;
  line-height: 26px;
}
.big svg {
  width: 40px;
  height: 36px;
}
.big .tri {
  margin-top: 2px;
}
.stack {
  display: grid;
  grid-template-rows: repeat(3, 27px);
  margin-left: 4px;
}
.stack:first-child {
  margin-left: 0;
}
.stack + .big {
  margin-left: 4px;
}
.stack button {
  gap: 3px;
}
.stack svg {
  width: 18px;
  height: 18px;
}
.stack .tri {
  margin-left: 4px;
}
.stack button:disabled {
  color: #b4b6b9;
}
.group-name {
  text-align: center;
  color: #7b7d81;
}

/* panels */
.workspace {
  flex: 1;
  display: flex;
  gap: 7px;
  min-height: 0;
  margin: 5px 10px 0 12px;
}
.panel {
  display: flex;
  flex-direction: column;
  min-width: 0;
  border: 1px solid #ced2d6;
}
.panel-head {
  display: flex;
  align-items: center;
  gap: 12px;
  padding: 4px 3px 0 9px;
}
.panel-head h2 {
  flex: 1;
  font-size: 27px;
  line-height: 36px;
  font-weight: 300;
  color: #2f5ba5;
  white-space: nowrap;
}
.panel-head, .view-end {
  color: #555;
}
.panel-head > .tri, .view-end .tri {
  width: 10px;
}
.model {
  width: 199px;
  padding-bottom: 10px;
}
.model .panel-head {
  gap: 10px;
}
.tree-tools {
  display: flex;
  align-items: center;
  height: 24px;
  padding-left: 6px;
}
.tree-tools button {
  width: 26px;
  color: #358cce;
}
.tree-tools .off {
  color: #a5a7ab;
}
.tree-tools .tri {
  width: 9px;
  margin: 0 15px 0 0;
}
.tree-box {
  flex: 1;
  display: flex;
  flex-direction: column;
  margin: 3px 4px 0 5px;
  border: 1px solid #ced2d6;
  background: #fff;
  overflow: hidden;
}
.tree {
  flex: 1;
  list-style: none;
  overflow: hidden;
}
.tree li {
  display: flex;
  align-items: center;
  height: 22px;
  white-space: nowrap;
}
.tree svg, .pi {
  flex: none;
  width: 20px;
  margin-right: 7px;
}
.tree .twist {
  flex: none;
  width: 12px;
  height: 12px;
  margin: 0 8px 0 5px;
}
.tree em {
  margin-left: 9px;
}
.level2 {
  padding-left: 25px;
}
.level3 {
  padding-left: 50px;
}
.level4 {
  padding-left: 75px;
}
.selected {
  background: #d9d9db;
}
.pi {
  padding-left: 5px;
  color: #4a94cd;
  font-size: 13px;
}
.pi small {
  font-size: 10px;
}
.turn-left {
  transform: rotate(-90deg);
}
.turn-right {
  transform: rotate(90deg);
}
.turn-down {
  transform: rotate(180deg);
}
.hscroll, .vscroll {
  display: flex;
}
.vscroll {
  flex-direction: column;
  width: 21px;
}
.hscroll {
  height: 21px;
}
.hscroll button, .vscroll button {
  width: 21px;
  height: 21px;
  justify-content: center;
  background: #f5f6f8;
}
.hscroll svg, .vscroll svg {
  width: 12px;
  height: 12px;
}
.rail {
  flex: 1;
  background: #fdfdff;
}
.thumb {
  background: #e4e5e7;
}
.hscroll .thumb {
  width: 45%;
  height: 100%;
}

/* settings */
.settings {
  width: 438px;
  border-color: #9ccbf2;
}
.settings .panel-head {
  color: #358cce;
  padding-right: 2px;
}
.settings h2, .settings h3 {
  color: #1e90e6;
  font-weight: 300;
}
.settings h3 {
  padding-left: 8px;
  font-size: 18px;
  line-height: 28px;
}
.build-tools {
  display: flex;
  align-items: center;
  height: 20px;
  padding-left: 6px;
  gap: 11px;
}
.build-tools button {
  gap: 7px;
}
.build-tools svg {
  width: 18px;
  height: 18px;
}
.scroll-area {
  flex: 1;
  display: flex;
  min-height: 0;
  margin-top: 5px;
}
.form {
  flex: 1;
  min-width: 0;
  overflow: hidden;
}
.scroll-area > .vscroll .thumb {
  height: 71%;
}
.label-row {
  display: flex;
  align-items: center;
  padding: 12px 6px 11px;
}
.label-row input {
  flex: 1;
  margin: 0 10px 0 12px;
}
input[type="text"] {
  min-width: 0;
  height: 25px;
  padding: 0 3px;
  border: 2px solid #d3d5d8;
  background: #fff;
}
.goto {
  width: 26px;
  height: 28px;
  justify-content: center;
  border: 2px solid #d0d2d5;
  border-radius: 3px;
  background: #eeeff1;
}
.form h4 {
  display: flex;
  align-items: center;
  gap: 14px;
  height: 32px;
  padding-left: 7px;
  background: #dde7f4;
  font-size: 17px;
}
.form h4 .tri {
  width: 10px;
  color: #444;
}
.fields {
  display: flex;
  flex-direction: column;
  padding: 11px 6px 0;
}
.fields > label {
  line-height: 24px;
}
.select {
  position: relative;
  display: block;
  margin: 5px 0 6px;
}
.select select {
  display: block;
  width: 100%;
  height: 26px;
  padding: 0 15px;
  appearance: none;
  border: 1px solid #d0d2d5;
  border-radius: 3px;
  background: linear-gradient(#f1f2f4, #e8e8e9);
}
.select::after {
  content: "";
  position: absolute;
  right: 8px;
  top: 11px;
  width: 9px;
  height: 5px;
  background: #000;
  clip-path: polygon(0 0, 100% 0, 50% 100%);
}
.file-row {
  display: flex;
  gap: 11px;
  margin-top: 6px;
}
.file-row input {
  flex: 1;
}
.file-row button {
  gap: 7px;
  padding-right: 8px;
}
.file-actions {
  display: flex;
  gap: 14px;
  height: 32px;
  padding: 3px 3px 0;
}
.file-actions button {
  gap: 5px;
}
.file-actions svg {
  width: 18px;
  height: 18px;
}
.file-actions .tri {
  margin-left: 3px;
}
.listbox {
  display: flex;
  height: 100px;
  margin-top: 6px;
  padding: 1px 2px 0 0;
  border: 1px solid #d0d2d5;
  border-bottom-width: 3px;
}
.listbox select {
  flex: 1;
  padding: 1px 0 0;
  border: none;
  background: none;
  overflow: hidden;
  outline: none;
}
.listbox option {
  padding: 0 7px;
  line-height: 24px;
  min-height: 24px;
}
.listbox .thumb {
  height: 42%;
}
.divider {
  display: flex;
  align-items: center;
  gap: 4px;
  margin: 7px 0 2px;
}
.divider::before, .divider::after {
  content: "";
  width: 12px;
  height: 1px;
  background: #d0d2d5;
}
.divider::after {
  flex: 1;
}
fieldset {
  min-width: 0;
  margin: 0 4px 14px;
  padding: 3px 9px 3px 10px;
  border: 1px solid #d0d2d5;
}
fieldset > label {
  display: block;
  line-height: 24px;
}
legend {
  padding: 0 4px 0 3px;
  margin-left: -3px;
}
legend label {
  display: flex;
  align-items: center;
  gap: 6px;
}
legend input {
  appearance: none;
  width: 16px;
  height: 16px;
  margin: 0;
  border: 1px solid #777;
  background: #f0f1f0;
}
legend input:checked::before {
  content: "";
  display: block;
  height: 14px;
  background: #222;
  clip-path: polygon(10% 50%, 28% 42%, 42% 68%, 80% 10%, 95% 15%, 48% 95%, 36% 95%);
}
.entities {
  margin-top: 12px;
  height: 90px;
}
.inline {
  display: flex;
  gap: 13px;
  color: #85878b;
}
.inline label {
  line-height: 34px;
}
.inline .select {
  flex: 1;
}
.inline .select::after {
  background: #c8cacd;
}
.inline select {
  opacity: 1;
  color: #85878b;
}

/* graphics */
.graphics {
  flex: 1;
}
.view-tabs {
  display: flex;
  align-items: stretch;
  gap: 10px;
  height: 37px;
  padding: 6px 3px 0 4px;
  border-bottom: 1px solid #ced2d6;
  font-size: 17px;
}
.view-tabs button {
  padding: 0 5px;
  background: #ebebeb;
}
.view-tabs .active {
  padding: 0 5px;
  margin-bottom: -1px;
  border: 1px solid #ced2d6;
  border-bottom: none;
  background: #f9faff;
  color: #2f5ba5;
}
.close {
  margin-left: 8px;
  color: #c3cbd8;
  font-size: 20px;
}
.view-end {
  display: flex;
  align-items: center;
  gap: 9px;
  margin-left: auto;
}
.view-tools {
  display: flex;
  align-items: center;
  height: 36px;
  padding-left: 2px;
}
.view-tools button {
  width: 26px;
  justify-content: center;
}
.view-tools svg {
  width: 18px;
  height: 18px;
}
.view-tools .tri {
  margin: 0 9px 0 4px;
}
.bar {
  width: 1px;
  height: 20px;
  margin: 0 5px;
  background: #ced2d6;
}
.canvas {
  position: relative;
  flex: 1;
  min-height: 0;
  padding: 11px 12px 20px 0;
  text-align: center;
  background: #fff;
}
.plot {
  width: auto;
  max-width: 100%;
  height: 100%;
}
.corner-icon {
  position: absolute;
  right: 5px;
  top: 5px;
}
.crisp {
  shape-rendering: crispEdges;
}
.agg {
  fill: #c7c7c7;
}
.dark {
  stroke: #222;
}
.gray {
  stroke: #c7c7c7;
}
.line {
  fill: #c7c7c7;
  stroke: #222;
}
.mark-cn {
  font-size: 50px;
  font-weight: 900;
  fill: #777;
  opacity: .75;
}
.mark-en {
  font-size: 16px;
  fill: #777;
  letter-spacing: 5px;
}
.mark-fish {
  font: italic 18px "Liberation Serif", serif;
  fill: #4a9ee0;
  letter-spacing: 5px;
}
.status {
  height: 43px;
  padding: 14px 0 0 1085px;
}
```
FILE: model.js
```js
// aggregate outlines, one list per tile, three units to a pixel
var tiles = [
  { x: -5, y: -7, shapes: [
    [68,75,90,58,125,55,165,105,165,150,95,150,70,115],
    [178,290,215,215,300,218,335,255,330,290,275,355,190,335],
    [310,130,330,78,370,68,410,78,425,135,405,185,360,200,325,185],
    [625,150,650,100,690,90,745,125,748,165,715,205,670,215,635,185],
    [795,105,805,78,850,65,880,80,888,115,865,150,820,150,800,130],
    [962,97,978,52,1060,58,1078,100,1040,145,1015,155],
    [865,245,880,190,950,172,1010,245,995,300,925,332,870,285],
    [465,235,475,185,520,170,555,190,565,230,540,262,495,265],
    [45,325,60,300,95,280,135,305,142,345,125,365,85,375],
    [362,400,380,355,455,348,473,400,455,440,400,440],
    [525,385,545,315,580,305,640,330,658,380,640,425,575,450],
    [718,345,735,310,790,305,815,350,790,395,745,400,722,380],
    [928,395,985,360,1035,415,1010,472,945,472,928,455],
    [55,465,75,430,115,420,155,465,120,515,75,512],
    [222,490,240,445,330,438,348,460,345,520,305,548,255,545],
    [98,592,195,555,240,590,252,640,205,705,125,712,100,690],
    [290,700,305,655,420,585,470,600,550,720,515,820,380,842,300,770],
    [525,570,575,525,630,565,622,605,600,625,530,600],
    [675,505,720,485,785,492,832,568,760,655,700,650,675,630],
    [915,670,925,610,960,585,1030,580,1080,620,1095,670,1020,748,940,725],
    [132,800,150,760,185,748,225,760,242,798,215,850,160,850],
    [668,795,735,740,790,770,785,815,765,840,715,858,690,845],
    [828,770,880,730,915,745,930,780,915,820,870,835,840,815],
    [540,880,555,845,600,828,640,842,652,885,620,935,585,935],
    [50,965,125,880,205,900,238,955,225,1010,198,1058,120,1070,90,1045],
    [278,960,300,905,400,905,420,945,415,985,385,1025,290,1005],
    [488,1035,495,1003,570,985,690,1045,698,1110,670,1175,640,1200,475,1140],
    [728,970,745,935,790,915,855,940,875,985,860,1050,765,1075,738,1045],
    [905,1020,950,905,1065,892,1105,895,1165,1020,1140,1110,985,1155,940,1130,905,1080]
  ] },
  { x: 340, y: -7, shapes: [
    [165,150,175,105,225,95,270,110,285,155,270,200,225,225,165,195],
    [320,145,350,85,430,75,470,145,430,215,370,220],
    [475,240,490,205,525,195,570,250,535,310,500,310],
    [625,155,675,98,735,115,745,155,705,215,670,220,630,185],
    [815,200,830,150,895,125,975,145,995,190,940,285,830,275],
    [38,280,65,245,155,240,198,305,190,345,110,398,60,385],
    [272,350,290,295,335,278,425,305,435,345,400,420,365,435,300,415],
    [588,350,625,320,685,345,690,385,655,430,610,432,588,415],
    [803,380,925,362,945,390,940,450,910,482,815,460],
    [80,575,130,500,215,520,230,575,200,620,155,643,90,615],
    [318,605,335,550,485,500,570,545,585,620,490,755,410,750],
    [600,500,625,475,665,475,692,520,665,565,625,572,600,545],
    [683,625,710,572,775,570,808,630,770,690,715,685],
    [843,665,860,640,920,638,942,685,910,745,865,745,840,715],
    [118,750,135,715,180,705,218,750,165,800,130,785],
    [305,845,305,810,345,770,390,805,385,840],
    [572,800,590,755,670,722,740,755,760,810,730,885,610,885],
    [890,880,910,850,960,840,985,885,965,930,910,930],
    [205,910,215,885,250,870,320,895,325,940,300,980,215,970],
    [458,900,475,870,540,858,562,885,560,920,490,950,470,940],
    [352,1010,375,975,440,975,455,1020,430,1055,385,1065,355,1040],
    [632,1000,650,960,685,945,740,985,745,1020,710,1055,650,1045],
    [873,1025,895,985,930,970,980,990,990,1035,965,1075,920,1090,885,1055]
  ] },
  { x: -5, y: 328, shapes: [
    [118,190,130,150,210,148,235,190,205,245,130,245],
    [305,150,325,115,370,108,398,160,370,200,318,195],
    [785,155,800,110,860,108,885,150,850,200,790,200],
    [892,235,935,200,975,200,985,245,970,270,910,290],
    [45,300,60,265,95,258,135,300,75,345],
    [235,300,250,270,305,245,350,275,350,305,285,350],
    [405,325,435,260,530,268,545,320,515,388,405,375],
    [590,280,610,240,645,240,670,280,625,335,595,325],
    [752,325,770,275,825,252,865,270,885,325,855,382,780,380],
    [625,410,645,372,720,375,728,420,715,450,655,458],
    [920,410,935,370,990,355,1040,385,1045,420,1015,470,915,460],
    [75,435,158,362,250,430,252,460,165,545,120,540],
    [345,470,370,430,410,428,435,470,405,520,360,512],
    [485,530,565,485,660,520,675,590,670,625,560,685,495,655],
    [750,535,770,495,800,488,855,520,845,565,820,590,785,585],
    [175,700,190,630,250,580,365,585,415,690,350,795,235,795,180,745],
    [435,750,455,715,505,700,540,740,540,775,510,805,440,795],
    [780,690,870,645,890,690,885,725,835,752],
    [48,820,110,775,150,800,148,845,110,872,65,865],
    [168,905,210,860,290,865,330,920,325,985,235,1020,185,1005],
    [430,895,470,860,575,880,585,940,555,980,495,1010,430,945],
    [612,850,680,795,745,795,780,835,780,910,690,955,615,885],
    [830,820,895,795,930,830,925,880,840,880],
    [795,970,830,920,885,918,910,965,870,1025,840,1025],
    [950,920,975,865,1055,860,1090,920,1045,965,1000,990],
    [925,600,990,520,1075,525,1145,635,1105,735,1035,750,955,720]
  ] },
  { x: 340, y: 348, shapes: [
    [148,45,165,10,200,-5,245,15,265,60,245,115,205,130,150,85],
    [405,65,495,5,575,80,540,145,485,160,415,130],
    [710,75,840,15,890,90,880,130,825,180,770,180,740,150],
    [595,150,635,125,685,160,680,195,610,205,595,190],
    [840,240,860,205,905,205,925,245,905,290,855,292],
    [15,235,50,190,130,180,180,225,185,275,155,325,115,350,70,350],
    [245,245,275,185,370,175,418,240,415,300,385,325,315,340,260,305],
    [540,310,555,265,715,245,768,325,768,385,740,420,690,445,600,445],
    [825,375,870,355,920,390,925,425,905,455,830,460],
    [372,420,400,372,465,400,460,435,410,460],
    [130,495,150,440,230,430,260,460,262,510,225,550,140,545],
    [468,500,525,468,575,520,560,570,515,592,468,560],
    [868,550,885,520,935,510,960,545,935,590,875,575],
    [318,575,345,535,380,525,422,555,415,605,350,625,325,610],
    [203,620,260,590,298,635,270,675,203,675],
    [590,610,665,535,830,590,845,650,830,740,780,780,705,780,590,675],
    [885,700,900,665,940,645,980,690,970,735,935,755,895,735],
    [95,790,100,735,180,722,210,770,200,800,155,840,100,825],
    [272,780,350,710,465,720,525,830,420,960,330,950,285,905],
    [572,830,590,790,640,795,652,835,610,885,570,870],
    [725,860,745,825,820,822,855,880,835,925,790,945,725,925],
    [895,875,915,830,985,850,985,885,950,900,905,895],
    [122,910,145,875,195,880,215,915,210,950,170,968,135,950]
  ] }
];

var SIZE = 681;
var MIN_DIST = 12;
var GAP = 1.5;
var seed = 7;

function random() {
  seed = (seed * 16807) % 2147483647;
  return seed / 2147483647;
}

function toPath(points) {
  return 'M' + points.map(function (p) {
    return p[0].toFixed(1) + ' ' + p[1].toFixed(1);
  }).join('L') + 'Z';
}

// scatter the cell seeds, none closer than MIN_DIST
var cell = 12;
var grid = {};
var sites = [];

function near(x, y, reach) {
  var found = [];
  var cx = Math.floor(x / cell), cy = Math.floor(y / cell);
  for (var i = cx - reach; i <= cx + reach; i++) {
    for (var j = cy - reach; j <= cy + reach; j++) {
      var list = grid[i + j * 1000];
      if (list) found = found.concat(list);
    }
  }
  return found;
}

for (var n = 0; n < 60000; n++) {
  var x = random() * SIZE, y = random() * SIZE;
  var free = near(x, y, 1).every(function (s) {
    return Math.hypot(s[0] - x, s[1] - y) > MIN_DIST;
  });
  if (free) {
    var key = Math.floor(x / cell) + Math.floor(y / cell) * 1000;
    (grid[key] = grid[key] || []).push([x, y]);
    sites.push([x, y]);
  }
}

// keep the part of poly where a*x + b*y <= c
function clip(poly, a, b, c) {
  var out = [];
  for (var i = 0; i < poly.length; i++) {
    var p = poly[i], q = poly[(i + 1) % poly.length];
    var dp = a * p[0] + b * p[1] - c, dq = a * q[0] + b * q[1] - c;
    if (dp <= 0) out.push(p);
    if (dp * dq < 0) {
      var t = dp / (dp - dq);
      out.push([p[0] + t * (q[0] - p[0]), p[1] + t * (q[1] - p[1])]);
    }
  }
  return out;
}

var cells = sites.map(function (s) {
  var poly = [[3, 3], [SIZE - 3, 3], [SIZE - 3, SIZE - 3], [3, SIZE - 3]];
  near(s[0], s[1], 3).forEach(function (o) {
    var dx = o[0] - s[0], dy = o[1] - s[1], d = Math.hypot(dx, dy);
    if (d === 0) return;
    var a = dx / d, b = dy / d;
    poly = clip(poly, a, b, a * s[0] + b * s[1] + d / 2 - GAP);
  });
  return poly.length > 2 ? toPath(poly) : '';
}).join('');

var aggregates = tiles.map(function (tile) {
  return tile.shapes.map(function (s) {
    var points = [];
    for (var i = 0; i < s.length; i += 2) {
      points.push([tile.x + s[i] / 3, tile.y + s[i + 1] / 3]);
    }
    return toPath(points);
  }).join('');
}).join('');

document.getElementById('cells').setAttribute('d', cells);
document.getElementById('clip-path').setAttribute('d', cells);
document.querySelectorAll('.agg').forEach(function (el) {
  el.setAttribute('d', aggregates);
});
```
